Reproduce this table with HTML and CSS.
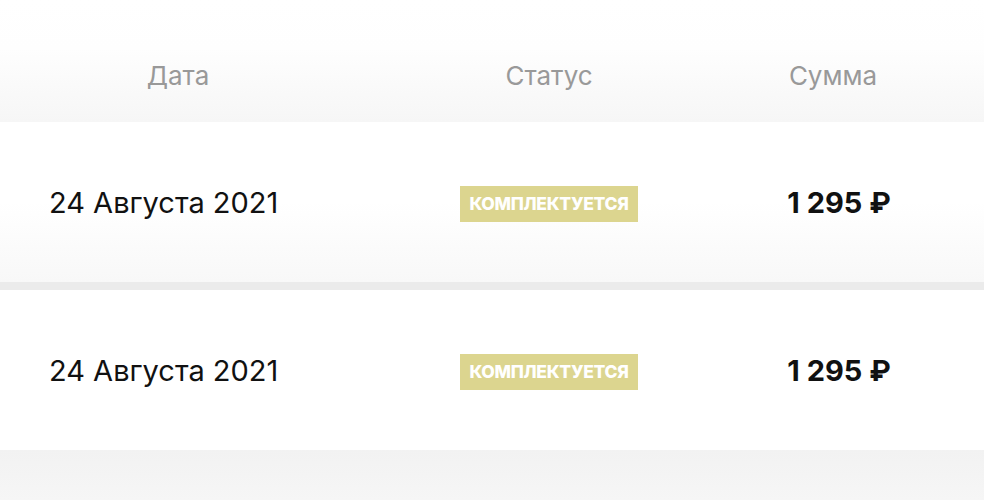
FILE: index.html
```html
<!DOCTYPE html>
<html lang="ru">
<head>
<meta charset="utf-8">
<link rel="stylesheet" href="styles.css">
</head>
<body>
<div class="table">
  <div class="head">
    <div class="hcell">Дата</div>
    <div class="hcell">Статус</div>
    <div class="hcell">Сумма</div>
  </div>
  <div class="row row-first">
    <div class="cell date">24 Августа 2021</div>
    <div class="cell status"><span class="badge">Комплектуется</span></div>
    <div class="cell sum">1 295 ₽</div>
  </div>
  <div class="row row-second">
    <div class="cell date">24 Августа 2021</div>
    <div class="cell status"><span class="badge">Комплектуется</span></div>
    <div class="cell sum">1 295 ₽</div>
  </div>
  <div class="foot"></div>
</div>
</body>
</html>
```

FILE: styles.css
```css
* { box-sizing: border-box; }
html, body { margin: 0; padding: 0; }
body {
  width: 984px;
  height: 500px;
  overflow: hidden;
  background: #f5f5f5;
  font-family: Inter, "Noto Sans", sans-serif;
}
.table { display: flex; flex-direction: column; }
.head, .row {
  display: grid;
  grid-template-columns: 356px 386px 182px 1fr;
  align-items: center;
}
.head {
  height: 122px;
  padding-top: 28px;
  background: linear-gradient(to bottom, #ffffff 0%, #fefefe 40%, #f6f6f6 100%);
}
.hcell {
  text-align: center;
  color: #999999;
  font-size: 26px;
  font-weight: 400;
}
.row { height: 160px; }
.row-first {
  background: linear-gradient(to bottom, #ffffff 0%, #ffffff 50%, #f8f8f8 100%);
  border-bottom: 8px solid #ebebeb;
  height: 168px;
}
.row-second { background: #ffffff; }
.cell { color: #111111; font-size: 29px; }
.date { padding-left: 49px; }
.status { text-align: center; }
.badge {
  display: inline-block;
  width: 178px;
  height: 36px;
  line-height: 36px;
  background: #dcd58f;
  color: #ffffff;
  font-size: 17.5px;
  font-weight: 800;
  text-transform: uppercase;
  letter-spacing: -0.3px;
}
.sum { text-align: center; font-weight: 700; padding-left: 12px; }
.foot {
  height: 50px;
  background: linear-gradient(to bottom, #f2f2f2, #f6f6f6);
}
```
